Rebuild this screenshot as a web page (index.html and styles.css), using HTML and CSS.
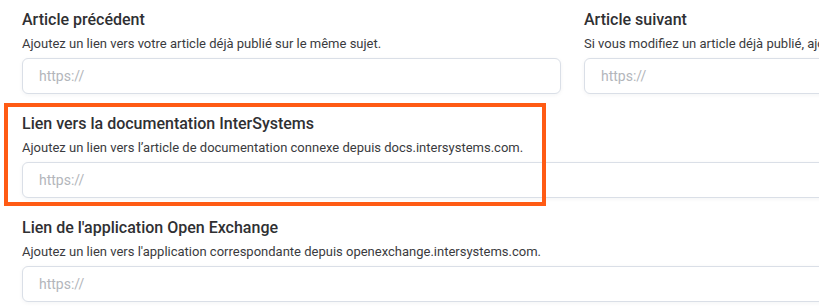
FILE: index.html
```html
<!DOCTYPE html>
<html lang="fr">
<head>
    <meta charset="UTF-8">
    <meta name="viewport" content="width=device-width, initial-scale=1.0">
    <title>Liens de l'article</title>
    <link rel="stylesheet" href="styles.css">
</head>
<body>
    <div class="links-form">
        <div class="row">
            <div class="form-group">
                <label for="prevArticle">Article précédent</label>
                <p class="hint">Ajoutez un lien vers votre article déjà publié sur le même sujet.</p>
                <input type="text" id="prevArticle" placeholder="https://">
            </div>
            <div class="form-group">
                <label for="nextArticle">Article suivant</label>
                <p class="hint">Si vous modifiez un article déjà publié, ajoutez un lien vers l'article qui le suit.</p>
                <input type="text" id="nextArticle" placeholder="https://">
            </div>
        </div>
        <div class="form-group highlighted">
            <label for="docLink">Lien vers la documentation InterSystems</label>
            <p class="hint">Ajoutez un lien vers l’article de documentation connexe depuis docs.intersystems.com.</p>
            <input type="text" id="docLink" placeholder="https://">
        </div>
        <div class="form-group">
            <label for="oexLink">Lien de l'application Open Exchange</label>
            <p class="hint">Ajoutez un lien vers l'application correspondante depuis openexchange.intersystems.com.</p>
            <input type="text" id="oexLink" placeholder="https://">
        </div>
    </div>
</body>
</html>
```

FILE: styles.css
```css
body {
    font-family: Roboto, "Liberation Sans", sans-serif;
    margin: 0;
    padding: 10px 0 0 22px;
    background-color: #ffffff;
    overflow: hidden;
}
.links-form {
    width: 1101px;
}
.row {
    display: grid;
    grid-template-columns: 1fr 1fr;
    column-gap: 23px;
}
.form-group {
    position: relative;
    margin-bottom: 20px;
}
label {
    display: block;
    font-size: 16px;
    line-height: 20px;
    font-weight: 500;
    color: #2f3033;
    margin-bottom: 5px;
}
.hint {
    margin: 0 0 5px;
    font-size: 13px;
    line-height: 18px;
    color: #3a3b3e;
    white-space: nowrap;
}
input[type="text"] {
    display: block;
    width: 100%;
    height: 36px;
    padding: 0 16px;
    border: 1px solid #dadfe7;
    border-radius: 6px;
    font-family: inherit;
    font-size: 14px;
    color: #333;
    background: #fff;
    box-shadow: 0 1px 4px rgba(20, 30, 60, 0.05);
    box-sizing: border-box;
}
input::placeholder {
    color: #b3b6bb;
}
.highlighted::after {
    content: "";
    position: absolute;
    left: -18px;
    top: -11px;
    width: 542px;
    height: 103px;
    border: 4px solid #ff5b14;
    box-sizing: border-box;
    pointer-events: none;
}
```
